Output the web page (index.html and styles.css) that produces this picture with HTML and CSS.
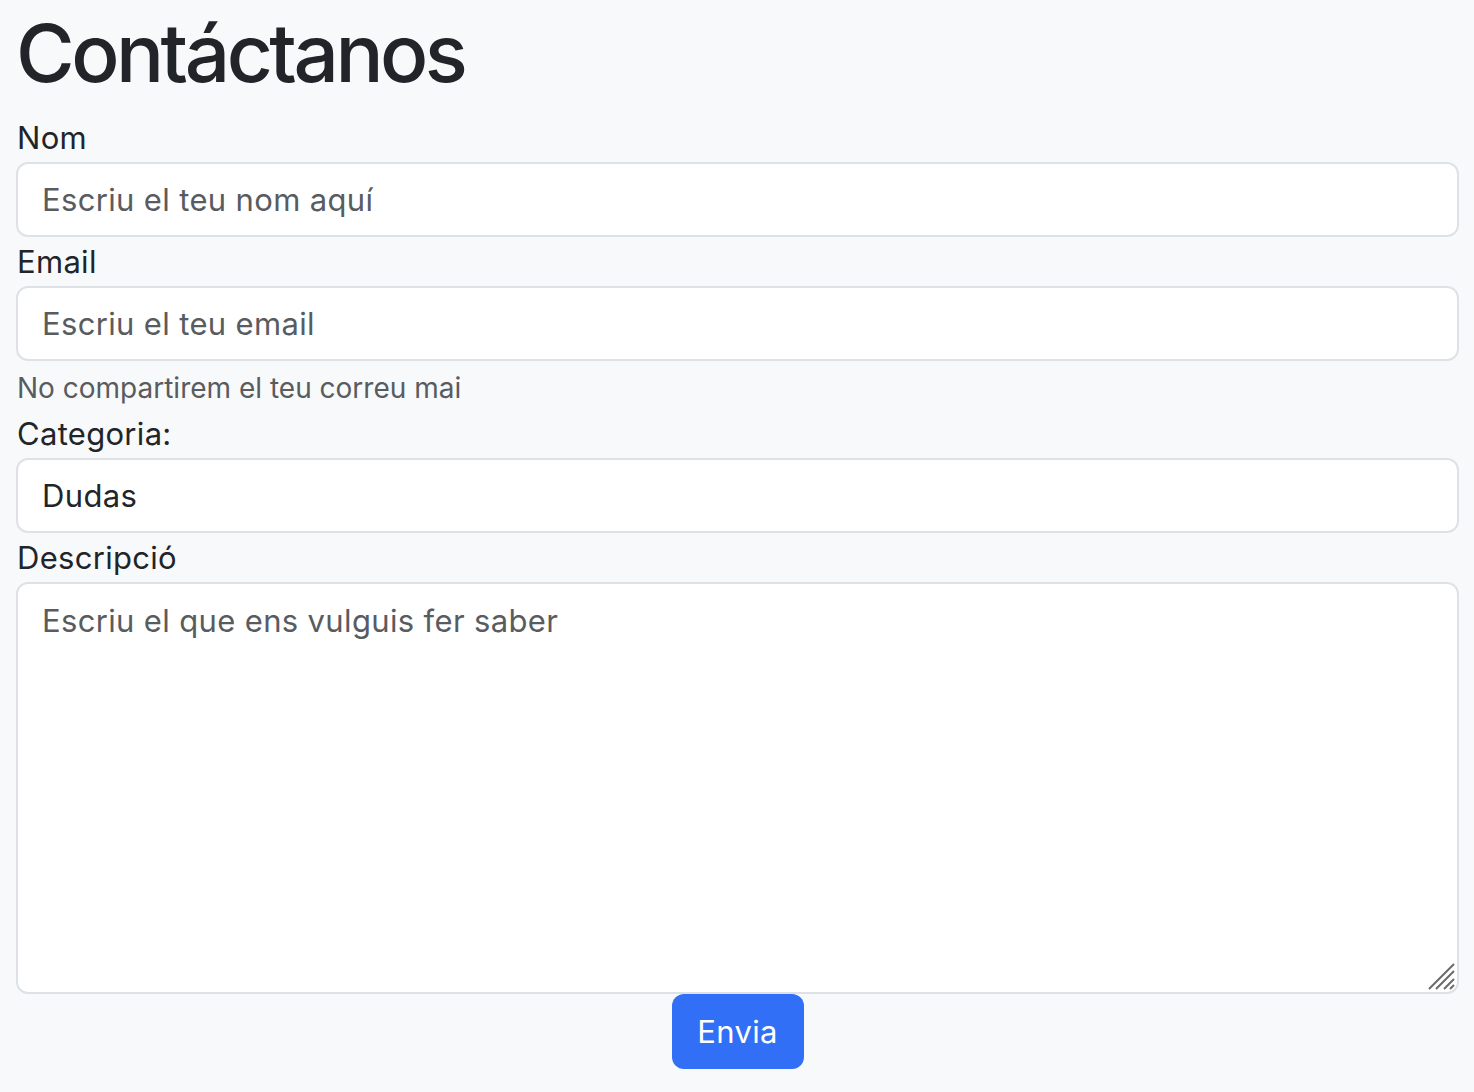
FILE: index.html
```html
<!DOCTYPE html>
<html lang="ca">
<head>
<meta charset="utf-8">
<title>Contáctanos</title>
<link rel="stylesheet" href="styles.css">
</head>
<body>
<main class="page">
  <h1 class="title">Contáctanos</h1>
  <form class="form">
    <label class="label" for="nom">Nom</label>
    <input class="control" id="nom" type="text" placeholder="Escriu el teu nom aquí">

    <label class="label" for="email">Email</label>
    <input class="control" id="email" type="email" placeholder="Escriu el teu email">
    <div class="help">No compartirem el teu correu mai</div>

    <label class="label" for="cat">Categoria:</label>
    <select class="control select" id="cat">
      <option>Dudas</option>
    </select>

    <label class="label" for="desc">Descripció</label>
    <div class="area-wrap">
      <textarea class="control area" id="desc" placeholder="Escriu el que ens vulguis fer saber"></textarea>
      <svg class="grip" width="28" height="28" viewBox="0 0 28 28" aria-hidden="true">
        <path d="M1 26 L26 1 M8 26 L26 8 M16 26 L26 16 M22 26 L26 22" stroke="#6b6b6b" stroke-width="2" stroke-linecap="butt"/>
      </svg>
    </div>

    <div class="actions">
      <button class="btn" type="button">Envia</button>
    </div>
  </form>
</main>
</body>
</html>
```

FILE: styles.css
```css
html, body {
  margin: 0;
  padding: 0;
  background: #f8f9fa;
}

body {
  font-family: Inter, "Noto Sans", "Liberation Sans", sans-serif;
  color: #212529;
}

.page {
  padding: 5px 15px 0 16px;
}

.title {
  margin: 0 0 12px;
  font-size: 80px;
  line-height: 96px;
  font-weight: 500;
  letter-spacing: -3.5px;
  color: #212529;
}

.form {
  display: flex;
  flex-direction: column;
}

.label {
  font-size: 31px;
  line-height: 49px;
  letter-spacing: 0.3px;
  color: #212529;
  padding-left: 1px;
}

.control {
  display: block;
  width: 100%;
  box-sizing: border-box;
  height: 75px;
  margin: 0;
  padding: 12px 24px;
  border: 2px solid #dee2e6;
  border-radius: 12px;
  background: #fff;
  font-family: inherit;
  font-size: 31px;
  line-height: 47px;
  letter-spacing: 0.35px;
  color: #212529;
  outline: none;
}

.control::placeholder {
  color: #595c5f;
  opacity: 1;
}

.select {
  appearance: none;
  -webkit-appearance: none;
}

.help {
  margin-top: 6px;
  font-size: 28px;
  line-height: 42px;
  color: #595c5f;
  padding-left: 1px;
}

.area-wrap {
  position: relative;
}

.area {
  height: 412px;
  resize: none;
  padding-top: 13px;
}

.grip {
  position: absolute;
  right: 3px;
  bottom: 3px;
}

.actions {
  display: flex;
  justify-content: center;
}

.btn {
  width: 132px;
  height: 75px;
  padding: 0;
  border: none;
  border-radius: 12px;
  background: #316ff6;
  color: #fff;
  font-family: inherit;
  font-size: 31px;
  line-height: 47px;
  letter-spacing: 0.3px;
  cursor: pointer;
}
```
